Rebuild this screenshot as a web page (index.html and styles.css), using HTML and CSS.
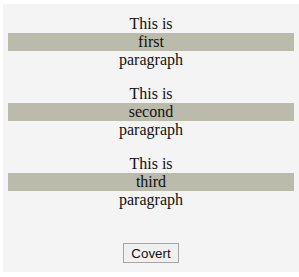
FILE: index.html
```html
<!DOCTYPE html>
<html lang="en">
<head>
    <meta charset="UTF-8">
    <meta name="viewport" content="width=device-width, initial-scale=1.0">
    <title>Paragraphs</title>
    <link rel="stylesheet" href="styles.css">
</head>
<body>
    <div class="frame">
        <p class="para">This is<br><span class="mark">first</span>paragraph</p>
        <p class="para">This is<br><span class="mark">second</span>paragraph</p>
        <p class="para">This is<br><span class="mark">third</span>paragraph</p>
        <div class="actions">
            <button id="covert">Covert</button>
        </div>
    </div>
</body>
</html>
```
FILE: styles.css
```css
body {
    margin: 0;
    background: #fff;
    font-family: "Liberation Serif", "Times New Roman", serif;
}
.frame {
    margin: 4px 0 0 3px;
    width: 296px;
    height: 268px;
    box-sizing: border-box;
    padding: 11px 5px 0 5px;
    background: #f4f4f4;
}
.para {
    margin: 0 0 16px 0;
    font-size: 16px;
    line-height: 18px;
    text-align: center;
    color: #111;
}
.mark {
    display: block;
    background: #babbaa;
}
.actions {
    margin-top: 34px;
    text-align: center;
}
button {
    font-family: "Liberation Sans", Arial, sans-serif;
    font-size: 13.33px;
    height: 20px;
    width: 56px;
    padding: 0;
    background: #f0f0f0;
    color: #111;
    border: 1px solid #a6a6a6;
    border-radius: 0;
}
```
